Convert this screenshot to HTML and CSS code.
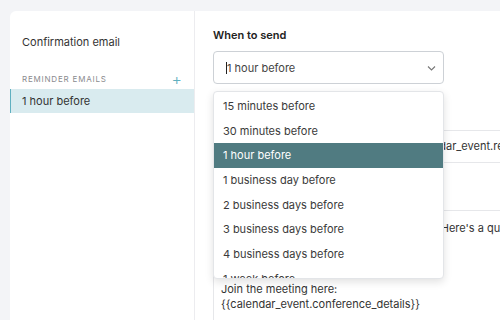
FILE: index.html
```html
<!DOCTYPE html>
<html lang="en">
<head>
    <meta charset="UTF-8">
    <meta name="viewport" content="width=device-width, initial-scale=1.0">
    <title>Reminder emails</title>
    <link rel="stylesheet" href="styles.css">
</head>
<body>
    <div class="card">
        <aside class="sidebar">
            <div class="side-item">Confirmation email</div>
            <div class="side-heading">
                <span>Reminder emails</span>
                <span class="add">+</span>
            </div>
            <div class="side-item active">1 hour before</div>
        </aside>

        <main class="content">
            <label class="field-label">When to send</label>
            <div class="select-wrap">
                <div class="select">
                    <span class="caret"></span><span>1 hour before</span>
                    <svg class="chevron" width="9" height="6" viewBox="0 0 9 6">
                        <path d="M1 1.5l3.5 3.5 3.5-3.5" fill="none" stroke="#777" stroke-width="1.1"/>
                    </svg>
                </div>
                <ul class="menu">
                    <li>15 minutes before</li>
                    <li>30 minutes before</li>
                    <li class="selected">1 hour before</li>
                    <li>1 business day before</li>
                    <li>2 business days before</li>
                    <li>3 business days before</li>
                    <li>4 business days before</li>
                    <li>1 week before</li>
                </ul>
            </div>

            <label class="field-label">Subject</label>
            <div class="input">Reminder: {{event_type.name}} at {{calendar_event.relative_time}}</div>

            <label class="field-label">Body</label>
            <div class="textarea">
                <p>Hi {{invitee.first_name}}, see you at noon. Here's a quick reminder about your meeting.</p>
                <p>&nbsp;</p>
                <p>{{event_type.name}}</p>
                <p>&nbsp;</p>
                <p>Join the meeting here:</p>
                <p>{{calendar_event.conference_details}}</p>
            </div>
        </main>
    </div>
</body>
</html>
```

FILE: styles.css
```css
* {
    margin: 0;
    padding: 0;
    box-sizing: border-box;
}

body {
    font-family: Inter, "Liberation Sans", sans-serif;
    font-size: 11px;
    color: #333;
    background-color: #f3f4f7;
    padding: 11px 0 0 10px;
    height: 320px;
    overflow: hidden;
}

.card {
    display: flex;
    background-color: #ffffff;
    border-radius: 6px 0 0 0;
    height: 309px;
    overflow: hidden;
}

.sidebar {
    width: 185px;
    flex-shrink: 0;
    border-right: 1px solid #ececef;
    padding-top: 19px;
}

.side-item {
    padding: 0 12px;
    height: 24px;
    line-height: 24px;
    color: #333;
}

.side-item.active {
    background-color: #d9ebef;
    border-left: 1px solid #5fb0c0;
    padding-left: 11px;
}

.side-heading {
    display: flex;
    justify-content: space-between;
    align-items: center;
    padding: 0 12px;
    margin-top: 15px;
    height: 20px;
    font-size: 8px;
    letter-spacing: 0.8px;
    text-transform: uppercase;
    color: #8a8a8e;
}

.add {
    font-size: 16px;
    letter-spacing: 0;
    color: #5fb0c0;
    font-weight: 300;
}

.content {
    flex: 1;
    min-width: 420px;
    padding: 16px 0 0 18px;
}

.field-label {
    display: block;
    font-weight: 600;
    font-size: 11px;
    line-height: 16px;
    color: #222;
    margin-bottom: 8px;
}

.select-wrap {
    position: relative;
    width: 231px;
    margin-bottom: 22px;
}

.select {
    display: flex;
    align-items: center;
    height: 33px;
    border: 1px solid #cdd1d6;
    border-radius: 4px;
    padding: 0 7px 0 12px;
    color: #444;
}

.caret {
    width: 1px;
    height: 12px;
    background-color: #222;
}

.chevron {
    margin-left: auto;
}

.menu {
    position: absolute;
    top: 40px;
    left: 0;
    width: 231px;
    height: 188px;
    overflow: hidden;
    list-style: none;
    background-color: #ffffff;
    border: 1px solid #e3e5e8;
    border-radius: 4px;
    box-shadow: 0 3px 8px rgba(0, 0, 0, 0.12);
    padding-top: 2px;
    z-index: 2;
}

.menu li {
    height: 24.7px;
    line-height: 24.7px;
    padding-left: 9px;
    color: #3a3a3a;
}

.menu li.selected {
    background-color: #507b81;
    color: #ffffff;
}

.input {
    height: 33px;
    line-height: 31px;
    border: 1px solid #e6e7ea;
    border-radius: 4px;
    padding: 0 8px 0 9px;
    white-space: nowrap;
    color: #333;
    margin-bottom: 23px;
}

.textarea {
    border: 1px solid #e6e7ea;
    border-radius: 4px;
    padding: 10px 7px;
    line-height: 15.3px;
    white-space: nowrap;
    color: #333;
}
```
